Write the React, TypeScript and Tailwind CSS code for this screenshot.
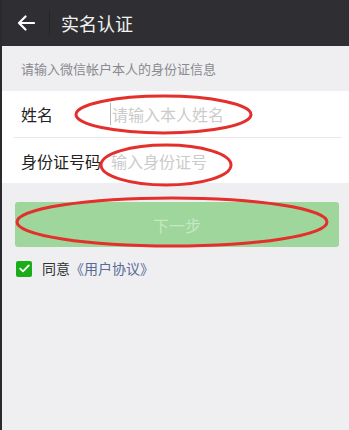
import React from "react";

export default function App() {
  const font = { fontFamily: '"Noto Sans CJK SC", "Noto Sans", sans-serif' };
  return (
    <div
      className="relative w-[349px] h-[430px] overflow-hidden bg-[#efeff2] border-l-2 border-[#2a2a2c]"
      style={font}
    >
      {/* header */}
      <div className="h-[46px] bg-[#2f2f33] flex items-center">
        <div className="w-[47px] flex items-center justify-center">
          <svg width="18" height="16" viewBox="0 0 18 16" fill="none">
            <path d="M17 8H2M8.5 1.5L2 8l6.5 6.5" stroke="#ffffff" strokeWidth="2.2" strokeLinecap="round" strokeLinejoin="round" />
          </svg>
        </div>
        <div className="w-px h-[24px] bg-[#252528]" />
        <div className="ml-[11px] text-[18px] leading-none text-[#f2f2f2]">实名认证</div>
      </div>
      {/* subtitle */}
      <div className="h-[45px] flex items-center pl-[19px] text-[13px] text-[#8a8a8e]">
        请输入微信帐户本人的身份证信息
      </div>
      {/* form */}
      <div className="bg-white">
        <div className="h-[46px] flex items-center pl-[19px]">
          <div className="w-[89px] text-[16px] text-[#222]">姓名</div>
          <div className="w-px h-[22px] bg-[#b8b8b8] mr-px" />
          <div className="text-[16px] text-[#cbcbcb]">请输入本人姓名</div>
        </div>
        <div className="ml-[12px] mr-[7px] h-px bg-[#e8e8e8]" />
        <div className="h-[45px] flex items-center pl-[19px]">
          <div className="w-[90px] text-[16px] text-[#222] whitespace-nowrap">身份证号码</div>
          <div className="text-[16px] text-[#cbcbcb]">输入身份证号</div>
        </div>
      </div>
      {/* button */}
      <div className="px-[13px] pt-[19px]">
        <div className="h-[45px] w-[324px] rounded-[3px] bg-[#9ed69c] flex items-center justify-center text-[16px] text-[#c4e8c2]">
          下一步
        </div>
      </div>
      {/* agreement */}
      <div className="flex items-center pl-[14px] mt-[11px]">
        <div className="w-[16px] h-[16px] rounded-[2px] bg-[#1aad19] flex items-center justify-center">
          <svg width="11" height="9" viewBox="0 0 11 9" fill="none">
            <path d="M1.2 4.6L4 7.3 9.8 1.4" stroke="#fff" strokeWidth="1.8" strokeLinecap="round" strokeLinejoin="round" />
          </svg>
        </div>
        <div className="ml-[10px] text-[14px] text-[#333]">
          同意<span className="text-[#576b95]">《用户协议》</span>
        </div>
      </div>
      {/* red annotation ellipses */}
      <svg className="absolute left-0 top-0 pointer-events-none" width="349" height="430" viewBox="2 0 349 430">
        <ellipse cx="163.5" cy="114.5" rx="87.5" ry="18.5" fill="none" stroke="#e3302c" strokeWidth="3" />
        <ellipse cx="166" cy="165" rx="65" ry="20" fill="none" stroke="#e3302c" strokeWidth="3" />
        <ellipse cx="172" cy="222" rx="155" ry="24" fill="none" stroke="#e3302c" strokeWidth="3" />
      </svg>
    </div>
  );
}
